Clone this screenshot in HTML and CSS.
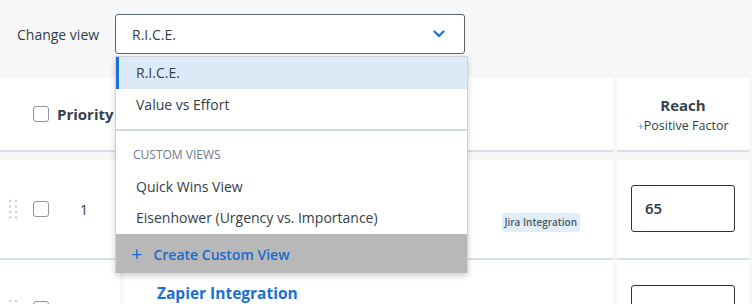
FILE: index.html
```html
<!DOCTYPE html>
<html>
  <head>
    <meta charset="utf-8">
    <title>Prioritization</title>
    <link rel="stylesheet" href="styles.css">
  </head>
  <body>
    <div class="toolbar">
      <span class="toolbarLabel">Change view</span>
      <div class="select">
        <span>R.I.C.E.</span>
        <svg class="chevron" width="12" height="8" viewBox="0 0 12 8">
          <path d="M1.5 1.5 L6 6 L10.5 1.5" fill="none" stroke="#1b74db" stroke-width="2.2" stroke-linecap="round" stroke-linejoin="round"/>
        </svg>
      </div>
    </div>

    <div class="table">
      <div class="tableRow head">
        <div class="cell priorityCell">
          <span class="checkbox"></span>
          <span class="headTitle">Priority</span>
        </div>
        <div class="cell"></div>
        <div class="cell factorHead">
          <span class="headTitle">Reach</span>
          <span class="factor"><b>+</b>Positive Factor</span>
        </div>
      </div>

      <div class="tableRow">
        <div class="cell priorityCell">
          <svg class="grip" width="10" height="20" viewBox="0 0 10 20">
            <circle cx="2" cy="2" r="1.2"/><circle cx="8" cy="2" r="1.2"/>
            <circle cx="2" cy="7.5" r="1.2"/><circle cx="8" cy="7.5" r="1.2"/>
            <circle cx="2" cy="13" r="1.2"/><circle cx="8" cy="13" r="1.2"/>
            <circle cx="2" cy="18.5" r="1.2"/><circle cx="8" cy="18.5" r="1.2"/>
          </svg>
          <span class="checkbox"></span>
          <span class="rank">1</span>
        </div>
        <div class="cell ideaCell">
          <span class="tag">Jira Integration</span>
        </div>
        <div class="cell inputCell">
          <div class="numInput">65</div>
        </div>
      </div>

      <div class="tableRow">
        <div class="cell priorityCell">
          <svg class="grip" width="10" height="20" viewBox="0 0 10 20">
            <circle cx="2" cy="2" r="1.2"/><circle cx="8" cy="2" r="1.2"/>
            <circle cx="2" cy="7.5" r="1.2"/><circle cx="8" cy="7.5" r="1.2"/>
            <circle cx="2" cy="13" r="1.2"/><circle cx="8" cy="13" r="1.2"/>
            <circle cx="2" cy="18.5" r="1.2"/><circle cx="8" cy="18.5" r="1.2"/>
          </svg>
          <span class="checkbox"></span>
          <span class="rank">2</span>
        </div>
        <div class="cell ideaCell">
          <span class="ideaTitle">Zapier Integration</span>
        </div>
        <div class="cell inputCell">
          <div class="numInput">40</div>
        </div>
      </div>
    </div>

    <!-- The open view menu -->
    <div class="menu">
      <div class="menuItem active">R.I.C.E.</div>
      <div class="menuItem">Value vs Effort</div>
      <div class="menuDivider"></div>
      <div class="menuSection">Custom views</div>
      <div class="menuItem">Quick Wins View</div>
      <div class="menuItem">Eisenhower (Urgency vs. Importance)</div>
      <div class="menuCreate"><span class="plus">+</span>Create Custom View</div>
    </div>
  </body>
</html>
```

FILE: styles.css
```css
body {
  margin: 0;
  background-color: #f7f7f7;
  font-family: 'Open Sans', 'Liberation Sans', sans-serif;
  color: #333e48;
  overflow: hidden;
}

.toolbar {
  display: flex;
  align-items: center;
  height: 78px;
  padding: 0 0 10px 17px;
  box-sizing: border-box;
}

.toolbarLabel {
  font-size: 14px;
  width: 98px;
}

.select {
  display: flex;
  align-items: center;
  justify-content: space-between;
  width: 350px;
  height: 40px;
  box-sizing: border-box;
  padding: 0 19px 0 16px;
  border: 1px solid #56656f;
  border-radius: 3px;
  background-color: #fff;
  font-size: 14px;
}

.table {
  display: flex;
  flex-direction: column;
}

.tableRow {
  display: grid;
  grid-template-columns: 120px 489px 132px;
  column-gap: 4px;
}

.tableRow.head {
  margin-bottom: 8px;
}

.cell {
  box-sizing: border-box;
  background-color: #fff;
  border-bottom: 2px solid #d7dfe4;
  height: 100px;
}

.head .cell {
  height: 74px;
}

.priorityCell {
  display: flex;
  align-items: center;
  padding-left: 33px;
}

.tableRow:not(.head) .priorityCell {
  padding-left: 8px;
}

.grip {
  fill: #c8cfd5;
  margin-right: 15px;
}

.checkbox {
  width: 14px;
  height: 14px;
  border: 1px solid #8c979f;
  border-radius: 3px;
  flex: none;
}

.headTitle {
  font-size: 15px;
  font-weight: 700;
  margin-left: 8px;
  color: #36424c;
}

.rank {
  font-size: 14px;
  margin-left: 31px;
}

.factorHead {
  display: flex;
  flex-direction: column;
  align-items: center;
  justify-content: center;
  gap: 2px;
}

.factorHead .headTitle {
  margin-left: 0;
}

.factor {
  font-size: 12.5px;
}

.factor b {
  color: #3f8be0;
  font-weight: 400;
  font-size: 11px;
}

.ideaCell {
  position: relative;
  padding: 22px 33px 0;
}

.ideaTitle {
  font-size: 15.5px;
  font-weight: 700;
  color: #1b6fd2;
}

.tag {
  position: absolute;
  right: 33px;
  bottom: 26px;
  background-color: #e1eefa;
  border-radius: 3px;
  padding: 2px 3px 3px;
  font-size: 10px;
  font-weight: 600;
  color: #4a5964;
}

.inputCell {
  padding: 25px 14px 0;
}

.numInput {
  height: 47px;
  box-sizing: border-box;
  border: 1px solid #2e3338;
  border-radius: 3px;
  padding-left: 13px;
  line-height: 45px;
  font-size: 15px;
  font-weight: 600;
  color: #2d363d;
  background-color: #fff;
}

.menu {
  position: absolute;
  top: 56px;
  left: 115px;
  width: 351px;
  background-color: #fff;
  border: 1px solid #cdd4d9;
  border-bottom: none;
  box-shadow: 0 3px 6px rgba(0, 0, 0, 0.18);
  font-size: 14px;
}

.menuItem {
  height: 31px;
  line-height: 31px;
  padding-left: 20px;
}

.menuItem.active {
  height: 32px;
  line-height: 32px;
  background-color: #dceaf7;
  box-shadow: inset 3px 0 0 #1a73d9;
}

.menuDivider {
  height: 2px;
  background-color: #d3dadf;
  margin-top: 9px;
}

.menuSection {
  padding: 16px 0 9px 17px;
  line-height: 15px;
  font-size: 12px;
  text-transform: uppercase;
  color: #6f7a83;
}

.menuCreate {
  margin-top: 1px;
  height: 39px;
  line-height: 39px;
  padding-left: 15px;
  background-color: #b8b8b8;
  color: #1a6bcc;
  font-weight: 600;
}

.plus {
  font-size: 20px;
  font-weight: 400;
  margin-right: 11px;
  vertical-align: -1px;
}
```
